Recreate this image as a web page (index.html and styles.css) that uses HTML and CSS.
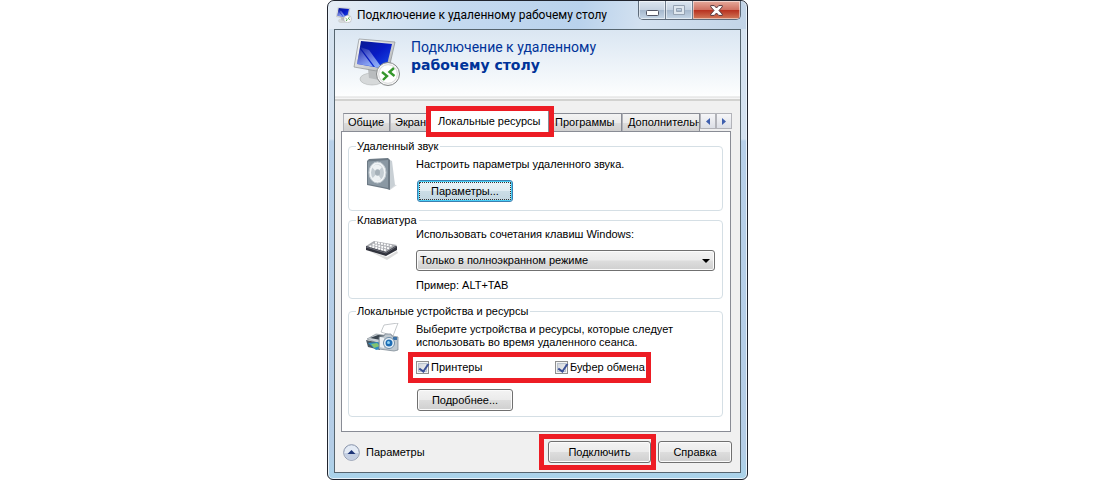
FILE: index.html
```
<!DOCTYPE html>
<html lang="ru">
<head>
  <meta charset="UTF-8">
  <meta name="viewport" content="width=device-width, initial-scale=1.0">
  <title>Подключение к удаленному рабочему столу</title>
  <link rel="stylesheet" href="styles.css">
</head>
<body>
  <div class="window">
    <div class="titlebar">
      <svg class="title-icon" viewBox="0 0 48 48"><use href="#rdp"/></svg>
      <h1 class="title">Подключение к удаленному рабочему столу</h1>
      <div class="caption">
        <button type="button" class="cap min" aria-label="Свернуть">
          <svg width="13" height="6" viewBox="0 0 13 6"><rect x=".5" y=".5" width="12" height="5" rx="1" fill="#fff" stroke="#535666"/></svg>
        </button>
        <button type="button" class="cap max" aria-label="Развернуть" disabled>
          <svg width="12" height="10" viewBox="0 0 12 10"><path d="M.5.5h11v9H.5zM3.500 3.500v3h5v-3z" fill="#dfe7ef" fill-rule="evenodd" stroke="#96a3b3"/></svg>
        </button>
        <button type="button" class="cap close" aria-label="Закрыть">
          <svg width="13" height="11" viewBox="0 0 13 11"><path d="M.7.6h3.600L6.500 3 8.700.6h3.600v1.200L9 5.500l3.300 3.700v1.200H8.700L6.500 8l-2.200 2.400H.7V9.200L4 5.500.7 1.800z" fill="#fff" stroke="#54363c"/></svg>
        </button>
      </div>
    </div>

    <div class="client">
      <div class="banner">
        <svg class="banner-icon" viewBox="0 0 48 48">
          <defs>
            <linearGradient id="screen" x1="0" y1="0" x2="1" y2="1">
              <stop offset="0" stop-color="#0a1a8c"/><stop offset=".5" stop-color="#0719c4"/><stop offset="1" stop-color="#1a50ea"/>
            </linearGradient>
            <linearGradient id="metal" x1="0" y1="0" x2="1" y2="1">
              <stop offset="0" stop-color="#fff"/><stop offset="1" stop-color="#a9acae"/>
            </linearGradient>
            <linearGradient id="shine" x1="0" y1="0" x2=".6" y2="1">
              <stop offset="0" stop-color="#fff" stop-opacity=".05"/><stop offset="1" stop-color="#a9c8ff" stop-opacity=".8"/>
            </linearGradient>
          </defs>
          <g id="rdp">
            <ellipse cx="19" cy="41" rx="12" ry="6" fill="#d6d9da" stroke="#aeb1b2" stroke-width=".6"/>
            <path d="M15 31l12 2-1 9-10-2z" fill="#b9bcbe"/>
            <path d="M6 1l36 3-7 31L1 29z" fill="url(#metal)" stroke="#8d9193" stroke-width=".7"/>
            <path d="M8 3l31 3-6 25L4 26z" fill="url(#screen)"/>
            <path d="M6 14l1-3 13 17.500L4 26z" fill="url(#shine)"/>
            <path d="M7 9l9 3 13 18-7-1z" fill="url(#shine)"/>
            <circle cx="35" cy="36" r="11.500" fill="#f6f6f6" stroke="#858889"/>
            <circle cx="35" cy="36" r="9.300" fill="#fff" stroke="#c8cacb" stroke-width=".7"/>
            <path d="M29 34l5 4-4 4M41 30l-4.500 4 5 4" fill="none" stroke="#35972c" stroke-width="2.400"/>
          </g>
        </svg>
        <p class="banner-text">Подключение к удаленному<strong>рабочему столу</strong></p>
      </div>

      <div class="tabs" role="tablist">
        <button type="button" class="tab tab-general" role="tab">Общие</button>
        <button type="button" class="tab tab-display" role="tab">Экран</button>
        <button type="button" class="tab tab-local active" role="tab" aria-selected="true">Локальные ресурсы</button>
        <button type="button" class="tab tab-programs" role="tab">Программы</button>
        <button type="button" class="tab tab-more" role="tab">Дополнительно</button>
        <div class="scroll">
          <button type="button" aria-label="Назад"><svg width="4" height="7" viewBox="0 0 4 7"><path d="M4 0v7L0 3.500z" fill="#3e5fae"/></svg></button>
          <button type="button" aria-label="Вперед"><svg width="4" height="7" viewBox="0 0 4 7"><path d="M0 0v7l4-3.500z" fill="#3e5fae"/></svg></button>
        </div>
      </div>

      <div class="panel" role="tabpanel">
        <fieldset class="group sound">
          <legend>Удаленный звук</legend>
          <div class="row">
            <svg class="icon" viewBox="0 0 34 34">
              <path d="M22 26l9 1-7 5-6-2z" fill="#d9dcdf"/>
              <path d="M22 1l4 2 3 24-6 5z" fill="#c9d0d5"/>
              <path d="M1 3l2-2L22 0l2 2v30l-3-1L1 27z" fill="#6d7a85"/>
              <path d="M2 3.500L22 2v28L2 26z" fill="#8a98a3"/>
              <ellipse cx="11.500" cy="14.500" rx="8.500" ry="10.500" fill="#f0f4f6" stroke="#c5cdd3"/>
              <ellipse cx="11.500" cy="14.500" rx="6.500" ry="8.300" fill="#c3ccd2"/>
              <path d="M11 15L6 9q5-5 10 0zM11 15l-5 6q5 4 9 0z" fill="#eef2f4"/>
              <ellipse cx="11.500" cy="14.500" rx="2.500" ry="3.200" fill="#a5b0b8"/>
            </svg>
            <div class="fields">
              <p>Настроить параметры удаленного звука.</p>
              <button type="button" class="btn focused">Параметры...</button>
            </div>
          </div>
        </fieldset>

        <fieldset class="group keyboard">
          <legend>Клавиатура</legend>
          <div class="row">
            <svg class="icon" viewBox="0 0 34 34">
              <path d="M3 18l18 6 10-6 1 2-11 7z" fill="#ddd"/>
              <path d="M0 13v4l20 6 11-6v-4z" fill="#31333d"/>
              <path d="M0 13L8 8l23 4-11 7z" fill="#a9abb0"/>
              <path d="M3.500 13l17 4.500M6.500 11.500l17 4M9 9.500l17 3.500" stroke="#fff" stroke-width="1.800" stroke-dasharray="2 1"/>
              <path d="M0 14l20 6 11-7" fill="none" stroke="#787b84" stroke-width=".8"/>
            </svg>
            <div class="fields">
              <label for="keys">Использовать сочетания клавиш Windows:</label>
              <div class="combo">
                <select id="keys">
                  <option>Только в полноэкранном режиме</option>
                </select>
                <svg class="arrow" width="8" height="4" viewBox="0 0 8 4"><path d="M0 0h8L4 4z"/></svg>
              </div>
              <p>Пример: ALT+TAB</p>
            </div>
          </div>
        </fieldset>

        <fieldset class="group devices">
          <legend>Локальные устройства и ресурсы</legend>
          <div class="row">
            <svg class="icon" viewBox="0 0 34 34">
              <path d="M15 9l3-7 14-2-5 13z" fill="#fff" stroke="#aab0b5" stroke-width=".7"/>
              <path d="M1 16l9-5 14 2-4 10z" fill="#c9d0d6" stroke="#7b858d" stroke-width=".6"/>
              <path d="M4 15l8-3 9 1-6 4z" fill="#39444e"/>
              <path d="M0 17l14 3v7L2 24z" fill="#4b5964"/>
              <path d="M2 20l10-1 5 6-7 2z" fill="#2d8bc3"/>
              <path d="M5 21l6-1 3 3-6 2z" fill="#83c46e"/>
              <path d="M13 14l5-1 1-2h6l1 2 6 1v13l-4 1-15-2z" fill="#bfc8cf" stroke="#73808b" stroke-width=".7"/>
              <path d="M14 14l4 1v10l-4-1z" fill="#edf1f4"/>
              <path d="M27 14h4v3h-4z" fill="#3c72a8"/>
              <circle cx="23" cy="20" r="5.500" fill="#eaf2f8" stroke="#6e8ca6"/>
              <circle cx="23" cy="20" r="3.500" fill="#1d6db5"/>
              <circle cx="22.500" cy="19.500" r="1.500" fill="#8fd2f5"/>
            </svg>
            <div class="fields">
              <p>Выберите устройства и ресурсы, которые следует использовать во время удаленного сеанса.</p>
              <div class="checks">
                <label class="check"><input type="checkbox" checked>Принтеры</label>
                <label class="check"><input type="checkbox" checked>Буфер обмена</label>
              </div>
              <button type="button" class="btn">Подробнее...</button>
            </div>
          </div>
        </fieldset>
      </div>

      <div class="footer">
        <button type="button" class="toggle">
          <svg width="17" height="17" viewBox="0 0 17 17">
            <circle cx="8.500" cy="8.500" r="7.800" fill="#e4ebf5" stroke="#8591a8"/>
            <path d="M1.500 9a7 7 0 0 0 14 0z" fill="#c4cfe2"/>
            <path d="M8.500 6l4 4h-8z" fill="#1d3577"/>
          </svg>
          Параметры
        </button>
        <div class="connect"><button type="button" class="btn">Подключить</button></div>
        <button type="button" class="btn help">Справка</button>
      </div>
    </div>
  </div>
</body>
</html>
```
FILE: styles.css
```
* {
  box-sizing: border-box;
}
body {
  margin: 0;
  padding-right: 24px;
  background: #fff;
  color: #000;
  font: 11px/13px "Liberation Sans", Arial, sans-serif;
}
button, select, input {
  margin: 0;
  font: inherit;
  color: inherit;
}
p {
  margin: 0;
}
.window {
  display: flex;
  flex-direction: column;
  max-width: 421px;
  min-height: 100vh;
  margin: 0 auto;
  padding: 0 6px 6px;
  border: 1px solid #20242e;
  border-radius: 7px 7px 6px 6px;
  background: linear-gradient(#d5e2ef, #d3e1ef 138px, #b7d0e9 140px, #b4cde6 94%, #a9d3ea);
  box-shadow: inset 0 0 0 1px #e9f2fa;
}
.titlebar {
  display: flex;
  align-items: center;
  height: 28px;
  margin: 0 -5px;
  padding: 0 5px 0 7px;
  border-radius: 6px 6px 0 0;
  background: linear-gradient(100deg, #e6edf5, #c5daf0 30%, #b9d2ec 60%, #d3e1f0 75%, #c2d4e7);
}
.title-icon {
  width: 16px;
  height: 16px;
  margin-right: 5px;
}
.title {
  flex: 1;
  margin: 0;
  font: 12px/16px Roboto, sans-serif;
  white-space: nowrap;
}
.caption {
  display: flex;
  align-self: flex-start;
  height: 19px;
  border: 1px solid #5d6a79;
  border-top: 0;
  border-radius: 0 0 5px 5px;
  overflow: hidden;
}
.cap {
  display: flex;
  align-items: center;
  justify-content: center;
  width: 27px;
  padding: 0;
  border: 0;
  border-right: 1px solid #6e7c8c;
  background: linear-gradient(#dce6f0, #c5d2e1 48%, #a6b8cd 52%, #c6d6e7);
  box-shadow: inset 0 0 0 1px rgba(255, 255, 255, .5);
}
.cap.min {
  padding-top: 5px;
}
.cap.close {
  width: 47px;
  border-right: 0;
  background: linear-gradient(#e5aa9c, #cf7263 48%, #b83220 52%, #d27a5a);
}
.client {
  flex: 1;
  border: 1px solid #56656f;
  background: #f0f0f0;
}
.banner {
  display: flex;
  height: 71px;
  padding: 8px 16px 0 18px;
  border-bottom: 2px solid #d2d2d0;
  background: linear-gradient(#dae6f2, #fdfefe 66px, #dcdcdc 67px, #f5f5f5 68px);
}
.banner-icon {
  width: 48px;
  height: 48px;
}
.banner-text {
  margin-left: 10px;
  color: #003399;
  font: 14px/18px Roboto, sans-serif;
}
.banner-text strong {
  display: block;
  font: bold 14px/18px "DejaVu Sans", sans-serif;
}
.tabs {
  display: flex;
  align-items: flex-end;
  height: 30px;
  padding: 0 8px;
}
.tab {
  flex: none;
  height: 18px;
  padding: 0 4px;
  border: 1px solid #898c95;
  border-bottom: 0;
  border-left-color: #b0b2b8;
  background: linear-gradient(#f3f3f3, #ebebeb 50%, #dddddd 52%, #cfcfcf);
  text-align: left;
  white-space: nowrap;
}
.tab-general {
  width: 47px;
}
.tab-display {
  width: 41px;
}
.tab-programs {
  width: 73px;
  padding: 0 5px;
}
.tab-more {
  flex: 1;
  min-width: 0;
  padding: 0 5px;
  overflow: hidden;
}
.tab.active {
  z-index: 1;
  width: 118px;
  height: 21px;
  margin-bottom: -1px;
  padding: 0 7px;
  border-width: 0 1px 0 0;
  background: #fff;
  outline: 5px solid #ed1c24;
}
.scroll {
  display: flex;
  align-self: flex-end;
  margin-bottom: 2px;
}
.scroll button {
  display: flex;
  align-items: center;
  justify-content: center;
  width: 16px;
  height: 16px;
  padding: 0;
  border: 1px solid #b2b3b9;
  background: linear-gradient(#f6f6f8, #dcdfe6);
}
.panel {
  margin: 0 9px 0 6px;
  padding: 7px 7px 14px 6px;
  border: 1px solid #898c95;
  background: #fff;
}
.group {
  min-width: 0;
  margin: 0;
  padding: 0 7px;
  border: 1px solid #d5dfe5;
  border-radius: 4px;
}
.group legend {
  height: 14px;
  padding: 1px 2px 0 1px;
}
.row {
  display: flex;
  padding-left: 10px;
}
.icon {
  flex: none;
  width: 34px;
  height: 34px;
  margin-right: 16px;
}
.fields {
  flex: 1;
}
.sound {
  margin-bottom: 2px;
  padding-bottom: 8px;
}
.keyboard {
  margin-bottom: 5px;
  padding-bottom: 6px;
}
.devices {
  padding-bottom: 5px;
}
.sound .fields, .devices .fields {
  padding-top: 5px;
}
.sound .icon, .devices .icon {
  margin-top: 5px;
}
.keyboard .fields {
  padding-top: 1px;
}
.keyboard .icon {
  margin-top: 6px;
}
.btn {
  display: block;
  width: 96px;
  height: 22px;
  padding: 0;
  border: 1px solid #707070;
  border-radius: 3px;
  background: linear-gradient(#f3f3f3, #ebebeb 48%, #dddddd 52%, #cfcfcf);
  box-shadow: inset 0 0 0 1px #fbfbfb;
}
.fields .btn {
  margin-left: 1px;
}
.sound .btn {
  margin-top: 9px;
}
.devices .btn {
  margin-top: 6px;
}
.btn.focused {
  border-color: #3c7fb1;
  background: linear-gradient(#eaf3f8, #e0ecf2 48%, #cbdde6 52%, #c3d6e0);
  box-shadow: inset 0 0 0 1px #48d0f7;
  outline: 1px dotted #333;
  outline-offset: -3px;
}
.keyboard label {
  display: block;
}
.combo {
  position: relative;
  margin: 9px 0 8px;
}
.combo select {
  display: block;
  width: 100%;
  height: 21px;
  padding: 0 3px;
  border: 1px solid #707070;
  border-radius: 3px;
  background: linear-gradient(#f3f3f3, #ebebeb 48%, #dddddd 52%, #cfcfcf);
  box-shadow: inset 0 0 0 1px #fbfbfb;
  appearance: none;
}
.arrow {
  position: absolute;
  top: 9px;
  right: 5px;
  pointer-events: none;
}
.checks {
  display: flex;
  align-items: center;
  width: 243px;
  height: 31px;
  margin: 3px 0 0 -8px;
  padding-left: 3px;
  border: 5px solid #ed1c24;
}
.check {
  display: flex;
  align-items: center;
  width: 139px;
  white-space: nowrap;
}
.check:last-child {
  width: auto;
}
.check input {
  width: 13px;
  height: 13px;
  margin-right: 2px;
  border: 1px solid #8e8f8f;
  background: linear-gradient(135deg, #cbcfd5, #f6f6f6);
  box-shadow: inset 0 0 0 1px #f4f4f4, inset 0 0 0 2px #b9c3cf;
  appearance: none;
}
.check input:checked::after {
  content: "";
  display: block;
  width: 4px;
  height: 8px;
  margin: 0 0 0 4px;
  border: solid #3a4f96;
  border-width: 0 2px 2px 0;
  transform: rotate(35deg);
}
.footer {
  display: flex;
  align-items: center;
  height: 40px;
  padding: 0 8px;
}
.toggle {
  display: flex;
  align-items: center;
  gap: 6px;
  margin-right: auto;
  padding: 0;
  border: 0;
  background: none;
}
.connect {
  padding: 2px 0 2px 4px;
  border: 5px solid #ed1c24;
}
.connect .btn {
  width: 103px;
}
.help {
  width: 74px;
  margin-left: 2px;
}
```
